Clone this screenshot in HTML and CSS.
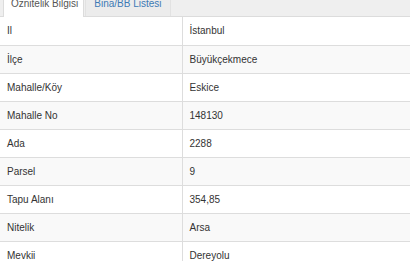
FILE: index.html
```
<!DOCTYPE html>
<html lang="tr">
<head>
<meta charset="utf-8">
<link rel="stylesheet" href="styles.css">
</head>
<body>
<div class="tabs">
  <a class="tab active">Öznitelik Bilgisi</a>
  <a class="tab other">Bina/BB Listesi</a>
</div>
<table class="attr">
  <tr><td class="k">Il</td><td class="v">İstanbul</td></tr>
  <tr><td class="k">İlçe</td><td class="v">Büyükçekmece</td></tr>
  <tr><td class="k">Mahalle/Köy</td><td class="v">Eskice</td></tr>
  <tr><td class="k">Mahalle No</td><td class="v">148130</td></tr>
  <tr><td class="k">Ada</td><td class="v">2288</td></tr>
  <tr><td class="k">Parsel</td><td class="v">9</td></tr>
  <tr><td class="k">Tapu Alanı</td><td class="v">354,85</td></tr>
  <tr><td class="k">Nitelik</td><td class="v">Arsa</td></tr>
  <tr><td class="k">Mevkii</td><td class="v">Dereyolu</td></tr>
</table>
</body>
</html>
```
FILE: styles.css
```
html, body {
  margin: 0;
  padding: 0;
  background: #fff;
  overflow: hidden;
  font-family: "Liberation Sans", Arial, sans-serif;
  font-size: 10px;
  color: #333;
}

.tabs {
  display: flex;
  height: 17px;
  box-sizing: border-box;
  background: #efefef;
  border-bottom: 1px solid #dcdcdc;
  padding-left: 3px;
  align-items: flex-end;
}

.tab {
  display: block;
  line-height: 15px;
  padding: 6px 8px;
  margin-top: -11px;
  white-space: nowrap;
  border: 1px solid transparent;
  border-bottom: none;
  box-sizing: border-box;
  height: 27px;
}

.tab.active {
  background: #fff;
  color: #555;
  border-color: #dcdcdc;
  padding-left: 7px;
  padding-right: 5px;
  height: 28px;
  margin-bottom: -1px;
}

.tab.other {
  margin-left: 1px;
  background: #ececec;
  color: #3d7ab5;
  border-color: #e2e2e2;
}

.attr {
  width: 100%;
  border-collapse: collapse;
}

.attr tr:nth-child(even) td {
  background: #f9f9f9;
}

.attr td {
  height: 28px;
  box-sizing: border-box;
  padding: 6px 7px;
  line-height: 15px;
  border-top: 1px solid #dddddd;
  vertical-align: middle;
  white-space: nowrap;
}

.attr tr:first-child td {
  border-top: none;
}

.attr td.k {
  width: 182px;
  box-sizing: border-box;
}

.attr td.v {
  border-left: 1px solid #dddddd;
}
```
